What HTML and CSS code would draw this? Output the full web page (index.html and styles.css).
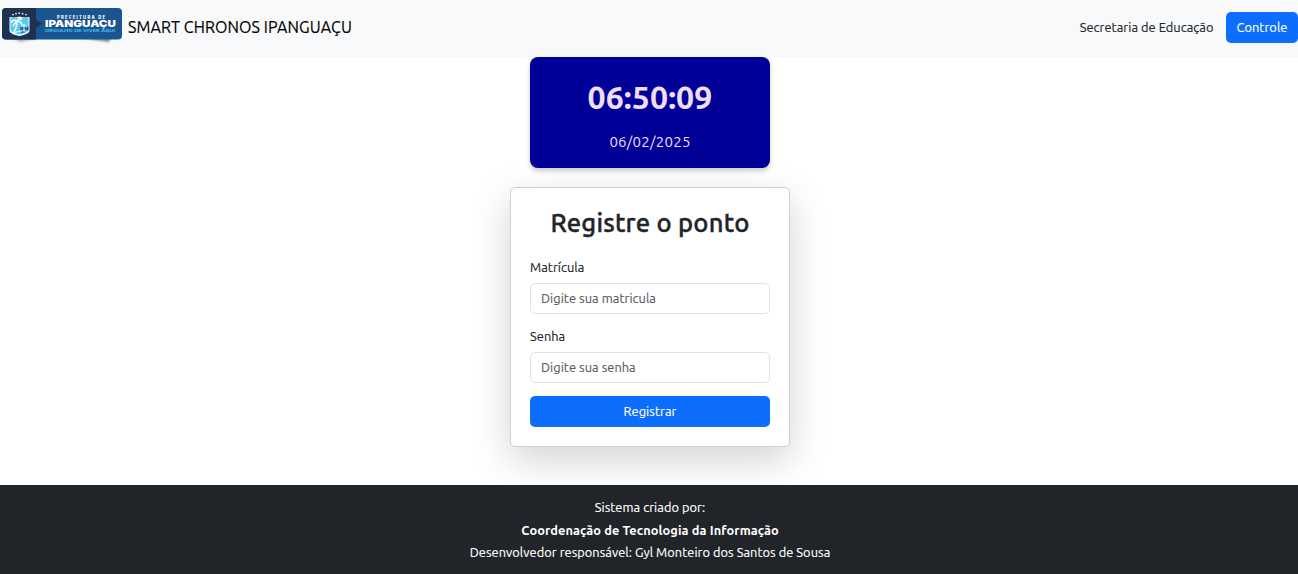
FILE: index.html
```
<!DOCTYPE html>
<html lang="pt-BR">
<head>
<meta charset="utf-8">
<title>Smart Chronos Ipanguaçu</title>
<link rel="stylesheet" href="styles.css">
</head>
<body>
<header class="navbar">
  <a class="brand" href="#">
    <svg class="logo" viewBox="0 0 122 40" role="img" aria-label="Prefeitura de Ipanguaçu">
      <defs>
        <filter id="soft" x="-20%" y="-80%" width="140%" height="260%"><feGaussianBlur stdDeviation="1"/></filter>
        <clipPath id="plate"><rect x="2" y="2" width="120" height="31.500" rx="4"/></clipPath>
      </defs>
      <path d="M12 32H40L20 36Z" fill="#777" opacity=".55" filter="url(#soft)"/>
      <path d="M80 32H111L109 36Z" fill="#555" opacity=".7" filter="url(#soft)"/>
      <g clip-path="url(#plate)">
        <path fill="#1b5590" d="M0 0H122V40H0Z"/>
        <path fill="#1f3151" d="M0 0H36V13.500L42 17.800L36 22V40H0Z"/>
      </g>
      <g fill="#d9e9f5"><circle cx="13" cy="8.600" r=".9"/><circle cx="16" cy="7.700" r=".9"/><circle cx="19.300" cy="7.200" r=".9"/><circle cx="22.600" cy="7.700" r=".9"/><circle cx="26" cy="8.600" r=".9"/></g>
      <path fill="#f4fbff" d="M9.500 11Q14 12 19.500 10.500Q25 12 29.500 11V25Q29 28 19.500 30Q10 28 9.500 25Z"/>
      <path fill="#55cdf5" d="M10.500 12H28.500V24Q27 27 19.500 28.500Q12 27 10.500 24Z"/>
      <path fill="#1b6aa7" d="M20 20.500H28.500V24Q27 26 21 27Z"/>
      <path fill="none" stroke="#fff" stroke-width="1.500" d="M17 15Q17 22 13 28M17 15Q12 13 11.500 17M17 15Q15 17 13 20M17 15Q19 12 22 13M17 15Q21 15 22 19"/>
      <path fill="none" stroke="#fff" stroke-width="1" d="M24 18V25M21 21L24 19L27 21M13 28Q18 24 27 25"/>
      <text class="logo-small" x="57" y="12.800" textLength="48">PREFEITURA DE</text>
      <text class="logo-name" x="45" y="20.900" textLength="71" lengthAdjust="spacingAndGlyphs">IPANGUAÇU</text>
      <text class="logo-motto" x="45" y="26" textLength="70" lengthAdjust="spacingAndGlyphs">ORGULHO DE VIVER AQUI</text>
    </svg>
    <span class="brand-name">SMART CHRONOS IPANGUAÇU</span>
  </a>
  <div class="nav-right">
    <span class="dept">Secretaria de Educação</span>
    <a class="btn btn-nav" href="#">Controle</a>
  </div>
</header>
<main class="content">
  <section class="clock">
    <div class="time">06:50:09</div>
    <div class="date">06/02/2025</div>
  </section>
  <form class="card">
    <h1 class="title">Registre o ponto</h1>
    <label class="label" for="matricula">Matrícula</label>
    <input class="input" id="matricula" type="text" placeholder="Digite sua matricula">
    <label class="label" for="senha">Senha</label>
    <input class="input" id="senha" type="password" placeholder="Digite sua senha">
    <button class="btn btn-submit" type="button">Registrar</button>
  </form>
</main>
<footer class="footer">
  <p class="line line-first">Sistema criado por:</p>
  <p class="line line-team">Coordenação de Tecnologia da Informação</p>
  <p class="line line-dev">Desenvolvedor responsável: Gyl Monteiro dos Santos de Sousa</p>
</footer>
</body>
</html>
```
FILE: styles.css
```
* { box-sizing: border-box; }
body {
  margin: 0;
  height: 574px;
  display: flex;
  flex-direction: column;
  overflow: hidden;
  background: #fff;
  color: #212529;
  font: 430 12.8px/19px Ubuntu, "Noto Sans", sans-serif;
  letter-spacing: .06px;
  -webkit-text-stroke: .15px;
}
.navbar {
  flex: none;
  height: 57px;
  display: flex;
  justify-content: space-between;
  background: #f8f9fa;
}
.brand { display: flex; color: #000; text-decoration: none; }
.logo { width: 122px; height: 40px; margin-top: 6px; overflow: visible; }
.logo text { font-family: Inter, sans-serif; fill: #fff; letter-spacing: 0; -webkit-text-stroke: 0; }
.logo-small { font-size: 4.2px; font-weight: 800; }
.logo-name { font-size: 9px; font-weight: 900; }
.logo .logo-motto { font-size: 3.8px; font-weight: 700; fill: #3cc0ee; }
.brand-name { margin: 15px 0 0 6px; font-size: 16px; line-height: 24px; letter-spacing: .1px; white-space: nowrap; }
.nav-right { display: flex; align-items: flex-start; padding-top: 12px; }
.dept { padding-top: 6px; margin-right: 12.5px; }
.btn {
  height: 31px;
  padding: 0;
  border: 0;
  border-radius: 5px;
  background: #0d6efd;
  color: #fff;
  font: inherit;
  letter-spacing: inherit;
  line-height: 31px;
  text-align: center;
  text-decoration: none;
}
.btn-nav { width: 72px; }
.btn-submit { padding-bottom: 1px; line-height: 29px; }
.content { flex: none; height: 428px; display: flex; flex-direction: column; align-items: center; padding-left: 2px; }
.clock {
  width: 240px;
  height: 111px;
  padding-top: 20px;
  border-radius: 8px;
  background: #009;
  color: #f1def2;
  text-align: center;
  box-shadow: 0 3px 5px rgba(0, 0, 0, .2);
}
.time { font-size: 32px; font-weight: 700; line-height: 40px; letter-spacing: .1px; }
.date { margin-top: 15px; font-size: 15px; line-height: 20px; letter-spacing: .25px; -webkit-text-stroke: 0; }
.card {
  width: 280px;
  height: 260px;
  margin: 19px 0 0;
  padding: 19px;
  display: flex;
  flex-direction: column;
  border: 1px solid #d0d0d0;
  border-radius: 5px;
  background: #fff;
  box-shadow: 0 13px 38px rgba(0, 0, 0, .176);
}
.title { margin: 0 0 20px; font-size: 25.6px; font-weight: 540; line-height: 31px; letter-spacing: .2px; text-align: center; white-space: nowrap; -webkit-text-stroke: .4px; }
.label { margin-bottom: 6px; line-height: 19px; }
.input {
  height: 31px;
  margin: 0 0 13px;
  padding: 0 10px 2px;
  border: 1px solid #dee2e6;
  border-radius: 5px;
  background: #fff;
  font: inherit;
  letter-spacing: inherit;
}
.input::placeholder { color: #595c5f; opacity: 1; }
.footer { flex: 1; padding: 13px 0 0 2px; background: #212529; color: #fff; text-align: center; }
.line { margin: 0 0 3.5px; }
.line-team { font-weight: 700; letter-spacing: .09px; -webkit-text-stroke: 0; }
```
